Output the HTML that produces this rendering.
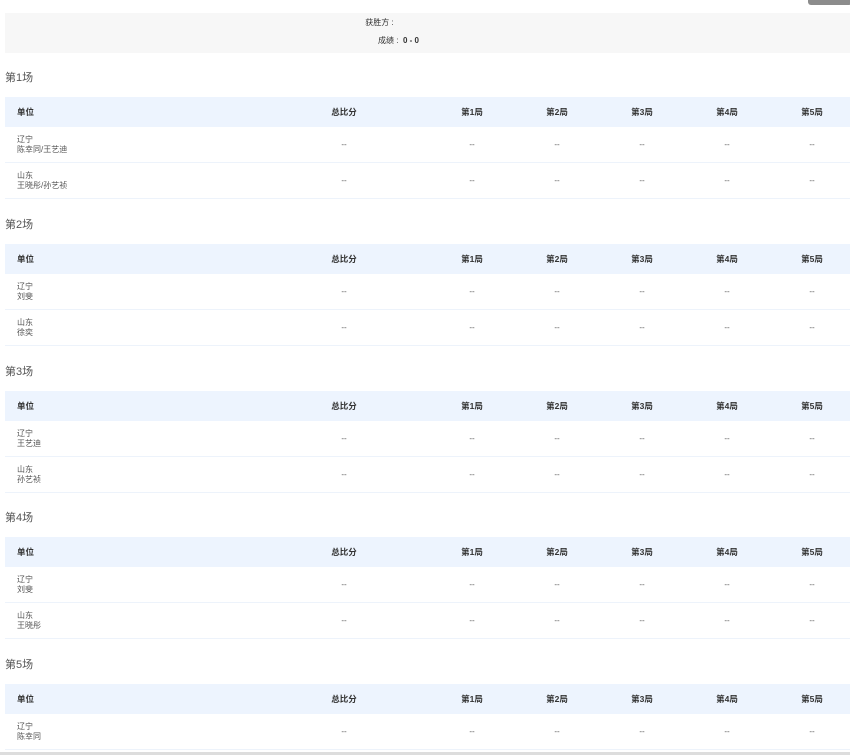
<!DOCTYPE html>
<html><head><meta charset="utf-8"><style>
*{margin:0;padding:0;box-sizing:border-box}
body{width:850px;height:755px;overflow:hidden;background:#fff;font-family:"Liberation Sans","Noto Sans CJK SC",sans-serif;color:#333;position:relative}
.btn{position:absolute;left:808px;top:-6px;width:44px;height:11px;background:#8c8c8c;border-radius:3px}
.top{position:absolute;left:5px;top:13px;width:845px;height:40px;background:#f7f7f7;font-size:8px;color:#333}
.top div{position:absolute;width:100%;text-align:center}
.sec{position:absolute;left:5px;width:850px}
.t{position:absolute;left:0;top:1px;font-size:11px;color:#555;line-height:14px}
.r{position:absolute;left:0;width:850px;height:36px;border-bottom:1px solid #edf3fb;font-size:8px;color:#555}
.h{height:30px;background:#edf4fe;font-weight:bold;color:#333;font-size:8.5px;border:none}
.c{position:absolute;top:0;height:100%;display:flex;align-items:center;justify-content:center}
.n{left:12px;width:240px;justify-content:flex-start;line-height:10px}
</style></head><body>
<div class="btn"></div>
<div class="top"><div style="top:4px;left:-48px">获胜方 :</div><div style="top:22px;left:-29px">成绩 : &nbsp;<b>0 - 0</b></div></div>
<script>
var data=[["辽宁<br>陈幸同/王艺迪","山东<br>王晓彤/孙艺祯"],["辽宁<br>刘斐","山东<br>徐奕"],["辽宁<br>王艺迪","山东<br>孙艺祯"],["辽宁<br>刘斐","山东<br>王晓彤"],["辽宁<br>陈幸同"]];
var cx=[339,467,552,637,722,807];
var h='';
data.forEach(function(rows,i){
 var y=Math.round(70+146.75*i);
 h+='<div class="sec" style="top:'+y+'px"><div class="t">第'+(i+1)+'场</div>';
 h+='<div class="r h" style="top:27px"><div class="c n">单位</div>';
 ['总比分','第1局','第2局','第3局','第4局','第5局'].forEach(function(s,k){h+='<div class="c" style="left:'+(cx[k]-40)+'px;width:80px">'+s+'</div>'});
 h+='</div>';
 rows.forEach(function(r,j){
  h+='<div class="r" style="top:'+(57+36*j)+'px"><div class="c n">'+r+'</div>';
  cx.forEach(function(x){h+='<div class="c" style="left:'+(x-40)+'px;width:80px">--</div>'});
  h+='</div>';
 });
 h+='</div>';
});
document.write(h);
</script>
<div style="position:absolute;left:0;top:752px;width:850px;height:3px;background:#ddd"></div>
</body></html>
